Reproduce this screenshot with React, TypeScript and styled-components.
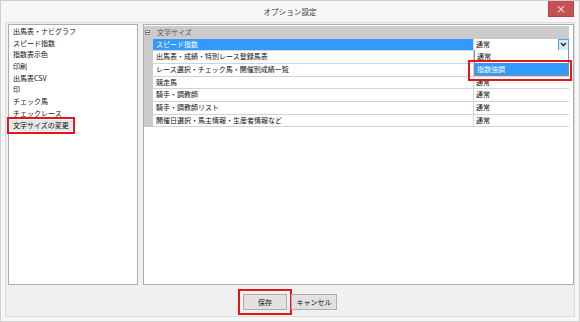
import React from 'react';
import styled, { createGlobalStyle } from 'styled-components';

const GlobalStyle = createGlobalStyle`
  html, body { margin: 0; padding: 0; background: #ffffff; }
  body { font-family: "Noto Sans CJK JP", "Noto Sans", sans-serif; }
  * { box-sizing: border-box; }
`;

const categories = [
  '出馬表・ナビグラフ',
  'スピード指数',
  '指数表示色',
  '印刷',
  '出馬表CSV',
  '印',
  'チェック馬',
  'チェックレース',
  '文字サイズの変更',
];

const settings = [
  'スピード指数',
  '出馬表・成績・特別レース登録馬表',
  'レース選択・チェック馬・開催別成績一覧',
  '競走馬',
  '騎手・調教師',
  '騎手・調教師リスト',
  '開催日選択・馬主情報・生産者情報など',
];

const Window = styled.div`
  width: 580px;
  height: 322px;
  display: flex;
  flex-direction: column;
  background: #f7f7f7;
  border: 1px solid #cfcfcf;
`;

const TitleBar = styled.div`
  height: 21px;
  display: grid;
  grid-template-columns: 1fr auto 1fr;
  align-items: start;
`;

const Title = styled.div`
  grid-column: 2;
  padding-top: 5px;
  font-size: 7.6px;
  line-height: 11px;
  color: #3a3a3a;
`;

const CloseButton = styled.div`
  grid-column: 3;
  justify-self: end;
  width: 26px;
  height: 16px;
  margin: 0 5px 0 0;
  background: #c75050;
  border: 1px solid #b24545;
  border-top: none;
  color: #ffffff;
  font-size: 10px;
  line-height: 15px;
  text-align: center;
`;

const Client = styled.div`
  flex: 1;
  margin: 0 4px 4px 4px;
  padding: 1px 0 0 2px;
  display: flex;
  flex-direction: column;
  background: #f0f0f0;
  border: 1px solid #dcdcdc;
`;

const Body = styled.div`
  height: 261px;
  display: flex;
  gap: 5px;
`;

const CategoryList = styled.div`
  width: 130px;
  background: #ffffff;
  border: 1px solid #acacac;
  padding: 1px 0 0 4px;
`;

const CategoryItem = styled.div`
  height: 11.7px;
  font-size: 7px;
  line-height: 11.7px;
  color: #111;
  white-space: nowrap;
`;

const MarkedText = styled.span`
  display: inline-block;
  margin-left: -3px;
  padding: 0 3px;
  height: 11px;
  line-height: 11px;
  background: #e6e6e6;
  outline: 2px solid #e8141b;
  outline-offset: 1px;
`;

const Panel = styled.div`
  flex: 1;
  background: #ffffff;
  border: 1px solid #acacac;
  padding: 1px 4px 0 0;
`;

const GroupHeader = styled.div`
  height: 12.5px;
  display: flex;
  align-items: center;
  background: #cbcbcb;
  font-size: 7px;
  color: #5a5a5a;
`;

const Collapse = styled.span`
  width: 5px;
  height: 5px;
  margin: 0 7px 0 1px;
  border: 1px solid #8a8a8a;
  background: #f4f4f4;
  display: flex;
  align-items: center;
  justify-content: center;
  &::after {
    content: '';
    width: 3px;
    height: 1px;
    background: #555;
  }
`;

const Row = styled.div`
  height: 12.7px;
  display: grid;
  grid-template-columns: 9px 321px 95px;
`;

const Gutter = styled.div`
  background: #cbcbcb;
`;

const NameCell = styled.div<{ $selected?: boolean }>`
  padding-left: 3px;
  font-size: 7px;
  line-height: 11.7px;
  white-space: nowrap;
  color: ${p => (p.$selected ? '#ffffff' : '#111111')};
  background: ${p => (p.$selected ? '#3399ff' : '#ffffff')};
  border-bottom: 1px solid #d3d3d3;
  border-right: 1px solid #d3d3d3;
`;

const ValueCell = styled.div`
  position: relative;
  padding-left: 2px;
  font-size: 7px;
  line-height: 11.7px;
  color: #111;
  background: #ffffff;
  border-bottom: 1px solid #d3d3d3;
`;

const DropButton = styled.div`
  position: absolute;
  top: 0;
  right: 0;
  width: 11px;
  height: 12px;
  background: #d6e9fa;
  border: 1px solid #5a9ee6;
  display: flex;
  align-items: center;
  justify-content: center;
`;

const DropList = styled.div`
  position: absolute;
  top: 100%;
  left: 0;
  right: 0;
  z-index: 2;
  background: #ffffff;
  border: 1px solid #8c8c8c;
  border-top: none;
`;

const DropItem = styled.div<{ $selected?: boolean }>`
  position: relative;
  height: 12.5px;
  padding-left: 2px;
  font-size: 7px;
  line-height: 12.5px;
  color: ${p => (p.$selected ? '#ffffff' : '#111111')};
  background: ${p => (p.$selected ? '#3399ff' : '#ffffff')};
`;

const RedMark = styled.div`
  position: absolute;
  left: -7px;
  right: -4px;
  top: -3px;
  bottom: -6px;
  border: 2px solid #e8141b;
`;

const Footer = styled.div`
  flex: 1;
  display: flex;
  justify-content: center;
  align-items: flex-start;
  gap: 4px;
  padding-top: 9px;
  padding-right: 2px;
`;

const Button = styled.div<{ $marked?: boolean; $width: number }>`
  width: ${p => p.$width}px;
  height: 16px;
  background: #e1e1e1;
  border: 1px solid #adadad;
  font-size: 7px;
  line-height: 14px;
  text-align: center;
  color: #111;
  ${p => (p.$marked ? 'outline: 2px solid #e8141b; outline-offset: 3px;' : '')}
`;

const Chevron = () => (
  <svg width="7" height="5" viewBox="0 0 7 5">
    <path d="M1 1 L3.5 3.5 L6 1" fill="none" stroke="#222" strokeWidth="1.4" />
  </svg>
);

export default function App() {
  return (
    <>
      <GlobalStyle />
      <Window>
        <TitleBar>
          <Title>オプション設定</Title>
          <CloseButton>×</CloseButton>
        </TitleBar>
        <Client>
          <Body>
            <CategoryList>
              {categories.map((c, i) => (
                <CategoryItem key={c}>
                  {i === categories.length - 1 ? <MarkedText>{c}</MarkedText> : c}
                </CategoryItem>
              ))}
            </CategoryList>
            <Panel>
              <GroupHeader>
                <Collapse />
                文字サイズ
              </GroupHeader>
              {settings.map((s, i) => (
                <Row key={s}>
                  <Gutter />
                  <NameCell $selected={i === 0}>{s}</NameCell>
                  <ValueCell>
                    通常
                    {i === 0 && (
                      <>
                        <DropButton>
                          <Chevron />
                        </DropButton>
                        <DropList>
                          <DropItem>通常</DropItem>
                          <DropItem $selected>
                            指数強調
                            <RedMark />
                          </DropItem>
                        </DropList>
                      </>
                    )}
                  </ValueCell>
                </Row>
              ))}
            </Panel>
          </Body>
          <Footer>
            <Button $width={44} $marked>保存</Button>
            <Button $width={46}>キャンセル</Button>
          </Footer>
        </Client>
      </Window>
    </>
  );
}
